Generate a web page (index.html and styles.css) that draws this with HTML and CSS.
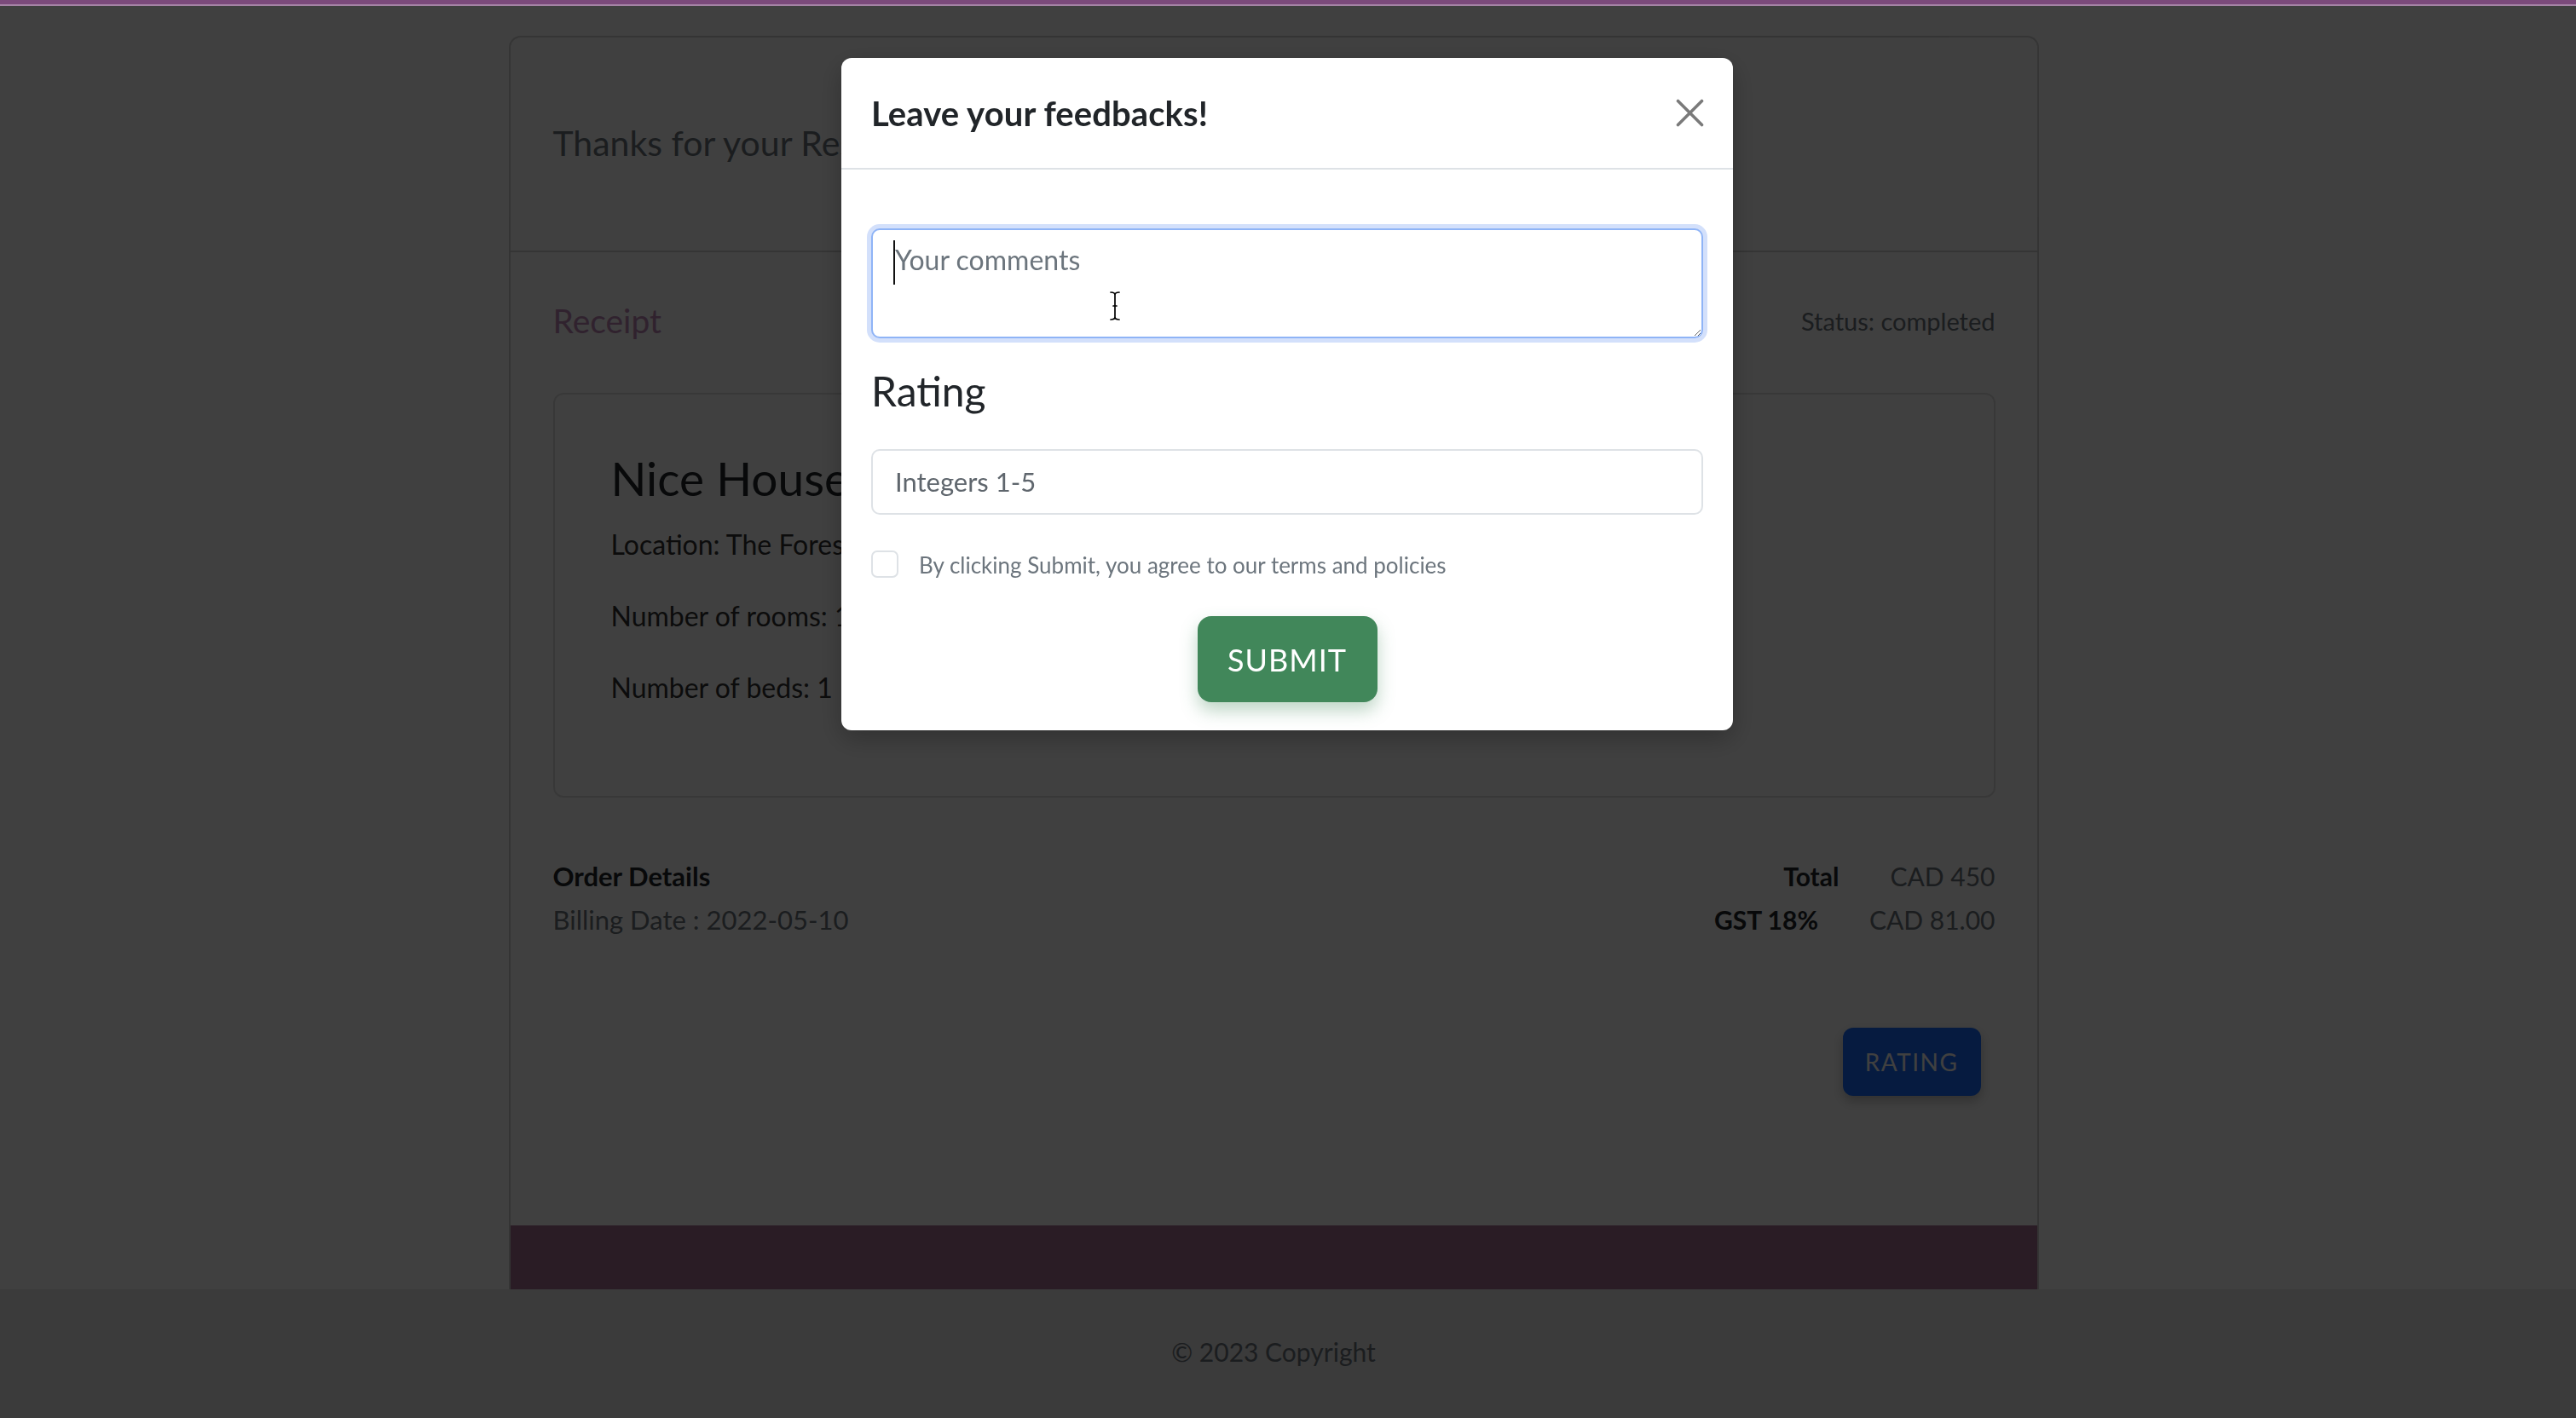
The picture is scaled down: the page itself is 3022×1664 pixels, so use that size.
FILE: index.html
```html
<!DOCTYPE html>
<html lang="en">
<head>
<meta charset="utf-8">
<title>Receipt</title>
<link rel="stylesheet" href="styles.css">
</head>
<body>
<div class="topbar"></div>
<main class="page">
  <section class="card">
    <header class="card-header">
      <h2 class="thanks">Thanks for your Reservation!</h2>
    </header>
    <div class="card-body">
      <div class="receipt-row">
        <h3 class="receipt">Receipt</h3>
        <span class="status">Status: completed</span>
      </div>
      <div class="house">
        <h1 class="house-name">Nice House</h1>
        <p class="house-line">Location: The Forest</p>
        <p class="house-line">Number of rooms: 1</p>
        <p class="house-line">Number of beds: 1</p>
      </div>
      <div class="order">
        <div class="order-left">
          <div class="order-title">Order Details</div>
          <div class="billing">Billing Date : 2022-05-10</div>
        </div>
        <div class="totals">
          <div class="trow"><b class="tlabel">Total</b><span class="tvalue">CAD 450</span></div>
          <div class="trow"><b class="tlabel">GST 18%</b><span class="tvalue">CAD 81.00</span></div>
        </div>
      </div>
      <div class="actions">
        <button class="btn-rating" type="button">RATING</button>
      </div>
    </div>
    <div class="band"></div>
  </section>
</main>
<footer class="footer">© 2023 Copyright</footer>

<div class="backdrop"></div>
<div class="modal-wrap">
  <div class="modal">
    <div class="modal-header">
      <h5 class="modal-title">Leave your feedbacks!</h5>
      <button class="close" type="button" aria-label="Close">
        <svg width="33" height="33" viewBox="0 0 33 33"><path d="M2.5 2.5 L30.5 30.5 M30.5 2.5 L2.5 30.5" stroke="#7a7a7a" stroke-width="3.6" stroke-linecap="round" fill="none"/></svg>
      </button>
    </div>
    <div class="modal-body">
      <div class="field">
        <textarea class="comments" placeholder="Your comments"></textarea>
        <span class="caret"></span>
        <svg class="ibeam" width="18" height="36" viewBox="0 0 18 36">
          <g fill="none" stroke-linecap="round">
            <path d="M4 2 C7 2 9 3 9 5 C9 3 11 2 14 2 M9 5 V31 M4 34 C7 34 9 33 9 31 C9 33 11 34 14 34 M7 18 H11" stroke="#fff" stroke-width="3.6"/>
            <path d="M4 2 C7 2 9 3 9 5 C9 3 11 2 14 2 M9 5 V31 M4 34 C7 34 9 33 9 31 C9 33 11 34 14 34 M7 18 H11" stroke="#000" stroke-width="1.7"/>
          </g>
        </svg>
      </div>
      <h4 class="rating-label">Rating</h4>
      <input class="rating-input" type="text" placeholder="Integers 1-5">
      <label class="check-row">
        <span class="checkbox"></span>
        <span class="check-text">By clicking Submit, you agree to our terms and policies</span>
      </label>
      <div class="submit-row">
        <button class="btn-submit" type="button">SUBMIT</button>
      </div>
    </div>
  </div>
</div>
</body>
</html>
```
FILE: styles.css
```css
* { box-sizing: border-box; }
html, body { margin: 0; padding: 0; }
body {
  font-family: "Lato", "Open Sans", sans-serif;
  background: #ffffff;
  color: #212529;
  overflow: hidden;
  height: 1664px;
}

.topbar {
  position: fixed;
  top: 0; left: 0; right: 0;
  height: 7px;
  background: #7b4a7b;
  border-bottom: 2px solid #a583a5;
  z-index: 30;
}

.page { padding: 42px 34px 0 0; }

.card {
  width: 1795px;
  margin: 0 auto;
  background: #fff;
  border: 2px solid rgba(0,0,0,0.18);
  border-bottom: 0;
  border-radius: 14px 14px 0 0;
}

.card-header {
  height: 252px;
  border-bottom: 2px solid rgba(0,0,0,0.18);
  display: flex;
  align-items: center;
  padding: 0 0 4px 50px;
}
.thanks { margin: 0; font-size: 41px; font-weight: 400; color: #6c757d; }

.card-body { padding: 0 49px 152px 50px; }

.receipt-row {
  display: flex;
  justify-content: space-between;
  align-items: center;
  height: 40px;
  margin-top: 60px;
}
.receipt { margin: 0; font-size: 39px; line-height: 40px; font-weight: 400; color: #c088b8; }
.status { font-size: 29px; color: #6c757d; }

.house {
  margin-top: 65px;
  border: 2px solid rgba(0,0,0,0.12);
  border-radius: 12px;
  padding: 66px 68px 109px 66px;
}
.house-name { margin: 0 0 28px; font-size: 55px; line-height: 64px; font-weight: 400; color: #212529; }
.house-line { margin: 0 0 48px; font-size: 32px; line-height: 36px; color: #333; }
.house-line:last-child { margin-bottom: 0; }

.order { display: flex; justify-content: space-between; margin-top: 74px; }
.order-title { font-size: 31px; line-height: 37px; font-weight: 700; color: #212529; }
.billing { margin-top: 15px; font-size: 31px; line-height: 35px; color: #6c757d; }

.totals { display: flex; flex-direction: column; align-items: flex-end; gap: 15px; padding-right: 0; }
.trow { display: flex; gap: 60px; font-size: 30px; line-height: 36px; }
.tlabel { font-weight: 700; color: #212529; }
.tvalue { color: #6c757d; }

.actions { display: flex; justify-content: flex-end; margin-top: 109px; padding-right: 17px; }
.btn-rating {
  width: 162px;
  height: 80px;
  border: 0;
  border-radius: 12px;
  background: #1a6efd;
  color: #fff;
  font-family: inherit;
  font-size: 28px;
  letter-spacing: 1.5px;
  box-shadow: 0 6px 14px rgba(0,0,0,0.25);
}

.band { height: 75px; background: #a87094; }

.footer {
  height: 151px;
  background: #e9e9e9;
  display: flex;
  align-items: center;
  justify-content: center;
  padding: 0 34px 6px 0;
  font-size: 30px;
  color: #6c757d;
}

.backdrop {
  position: fixed;
  inset: 0;
  background: rgba(0,0,0,0.75);
  z-index: 10;
}

.modal-wrap {
  position: fixed;
  inset: 0;
  z-index: 20;
  display: flex;
  justify-content: center;
  align-items: flex-start;
  padding: 68px 2px 0 0;
}
.modal {
  width: 1046px;
  background: #fff;
  border-radius: 12px;
  box-shadow: 0 10px 30px rgba(0,0,0,0.25);
}
.modal-header {
  height: 131px;
  border-bottom: 2px solid #dee2e6;
  padding: 0 34px 0 35px;
  display: flex;
  align-items: center;
  justify-content: space-between;
}
.modal-title { margin: 0; font-size: 40px; font-weight: 700; color: #212529; letter-spacing: 0.1px; }
.close { width: 33px; height: 33px; padding: 0; border: 0; background: none; display: flex; }

.modal-body { padding: 69px 35px 33px; }

.field { position: relative; }
.comments {
  display: block;
  width: 100%;
  height: 129px;
  border: 2px solid #8fb4f6;
  border-radius: 10px;
  box-shadow: 0 0 0 5px #d3e0fb;
  padding: 11px 26px 10px;
  font-family: inherit;
  font-size: 32px;
  line-height: 48px;
  color: #212529;
  outline: none;
  resize: vertical;
}
.comments::placeholder { color: #6c757d; }
.caret {
  position: absolute;
  left: 26px;
  top: 14px;
  width: 2px;
  height: 52px;
  background: #111;
}
.ibeam { position: absolute; left: 277px; top: 73px; }

.rating-label { margin: 33px 0 0; font-size: 48px; line-height: 58px; font-weight: 400; color: #212529; }

.rating-input {
  display: block;
  width: 100%;
  height: 77px;
  margin-top: 39px;
  border: 2px solid #dee2e6;
  border-radius: 10px;
  padding: 0 26px 2px;
  font-family: inherit;
  font-size: 31px;
  color: #212529;
  outline: none;
}
.rating-input::placeholder { color: #5f666d; }

.check-row { display: flex; align-items: center; gap: 24px; margin-top: 42px; height: 32px; }
.checkbox {
  flex: none;
  width: 32px;
  height: 32px;
  border: 2px solid #dee2e6;
  border-radius: 7px;
  background: #fff;
}
.check-text { font-size: 26px; line-height: 32px; color: #6c757d; position: relative; top: 1px; }

.submit-row { display: flex; justify-content: center; margin-top: 45px; }
.btn-submit {
  width: 211px;
  height: 101px;
  border: 0;
  border-radius: 16px;
  background: #41875a;
  color: #fff;
  font-family: inherit;
  font-size: 36px;
  letter-spacing: 1px;
  box-shadow: 0 10px 20px rgba(65,135,90,0.35);
}
```
